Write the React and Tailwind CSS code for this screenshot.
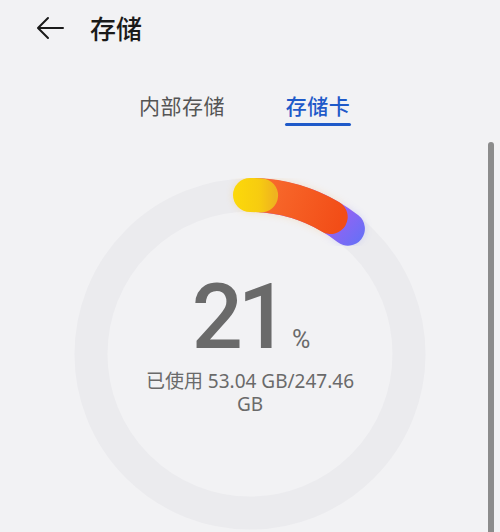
import React from "react";

function BackArrow() {
  return (
    <svg width="28" height="24" viewBox="0 0 28 24" fill="none">
      <path d="M27 12H2.5M12 2L2 12l10 10" stroke="#1a1a1a" strokeWidth="2" strokeLinecap="round" strokeLinejoin="round" />
    </svg>
  );
}

function Ring() {
  return (
    <svg width="360" height="360" viewBox="0 0 360 360" className="block">
      <defs>
        <linearGradient id="gy" gradientUnits="userSpaceOnUse" x1="165" y1="21" x2="205" y2="21">
          <stop offset="0" stopColor="#fcd80a" />
          <stop offset="0.6" stopColor="#f7cc10" />
          <stop offset="1" stopColor="#efb31f" />
        </linearGradient>
        <linearGradient id="go" gradientUnits="userSpaceOnUse" x1="190" y1="21" x2="270" y2="50">
          <stop offset="0" stopColor="#f86b2d" />
          <stop offset="1" stopColor="#f24d17" />
        </linearGradient>
        <linearGradient id="gp" gradientUnits="userSpaceOnUse" x1="250" y1="30" x2="290" y2="65">
          <stop offset="0" stopColor="#b35af0" />
          <stop offset="1" stopColor="#6a6ff6" />
        </linearGradient>
        <filter id="blur" x="-50%" y="-50%" width="200%" height="200%">
          <feGaussianBlur stdDeviation="5" />
        </filter>
      </defs>
      <circle cx="180" cy="180" r="159" fill="none" stroke="#ebebee" strokeWidth="33" />
      <g filter="url(#blur)" opacity="0.35">
        <path d="M191.09 21.39 A159 159 0 0 1 277.89 54.71" fill="none" stroke="#6a6ff6" strokeWidth="30" strokeLinecap="round" />
        <path d="M180 21 A159 159 0 0 1 260.69 43" fill="none" stroke="#f5a020" strokeWidth="30" strokeLinecap="round" />
      </g>
      <path d="M191.09 21.39 A159 159 0 0 1 277.89 54.71" fill="none" stroke="url(#gp)" strokeWidth="34" strokeLinecap="round" />
      <path d="M185.55 21.1 A159 159 0 0 1 260.69 43" fill="none" stroke="url(#go)" strokeWidth="34" strokeLinecap="round" />
      <path d="M180 21 A159 159 0 0 1 191.09 21.39" fill="none" stroke="url(#gy)" strokeWidth="34" strokeLinecap="round" />
    </svg>
  );
}

export default function App() {
  return (
    <div
      className="relative w-[500px] h-[532px] overflow-hidden bg-[#f2f2f4]"
      style={{ fontFamily: '"Noto Sans CJK SC", "Noto Sans", sans-serif' }}
    >
      <div className="flex items-center h-[56px] pl-[36px]">
        <BackArrow />
        <span className="ml-[26px] text-[26px] leading-[30px] font-medium text-[#1a1a1a]">存储</span>
      </div>

      <div className="mt-[35px] flex justify-center gap-[60px] pr-[10px]">
        <div className="text-[21px] leading-[28px] text-[#555555] tracking-[0.5px]">内部存储</div>
        <div className="flex flex-col items-center">
          <div className="text-[21px] leading-[28px] font-medium text-[#1f5ac9] tracking-[0.5px]">存储卡</div>
          <div className="mt-[4px] h-[3px] w-[66px] rounded-full bg-[#1f5ac9]" />
        </div>
      </div>

      <div className="mt-[48px] flex justify-center">
        <div className="relative w-[360px] h-[360px]">
          <Ring />
          <div className="absolute inset-x-0 top-[99px] flex flex-col items-center">
            <div className="flex items-baseline ml-[2px]">
              <span
                className="text-[90px] leading-[90px] font-medium text-[#6a6a6a] tracking-[-5px]"
                style={{ fontFamily: 'Roboto, "Noto Sans", sans-serif' }}
              >
                21
              </span>
              <span
                className="ml-[8px] text-[25px] text-[#6a6a6a]"
                style={{ fontFamily: 'Roboto, "Noto Sans", sans-serif' }}
              >
                %
              </span>
            </div>
            <div
              className="mt-[7px] w-[230px] text-center text-[19px] leading-[23px] text-[#6a6a6a]"
              style={{ fontFamily: '"Noto Sans", "Noto Sans CJK SC", sans-serif' }}
            >
              已使用 53.04 GB/247.46 GB
            </div>
          </div>
        </div>
      </div>

      <div className="absolute right-[6px] top-[142px] bottom-0 w-[6px] rounded-t-full bg-[#8c8c8c]" />
    </div>
  );
}
